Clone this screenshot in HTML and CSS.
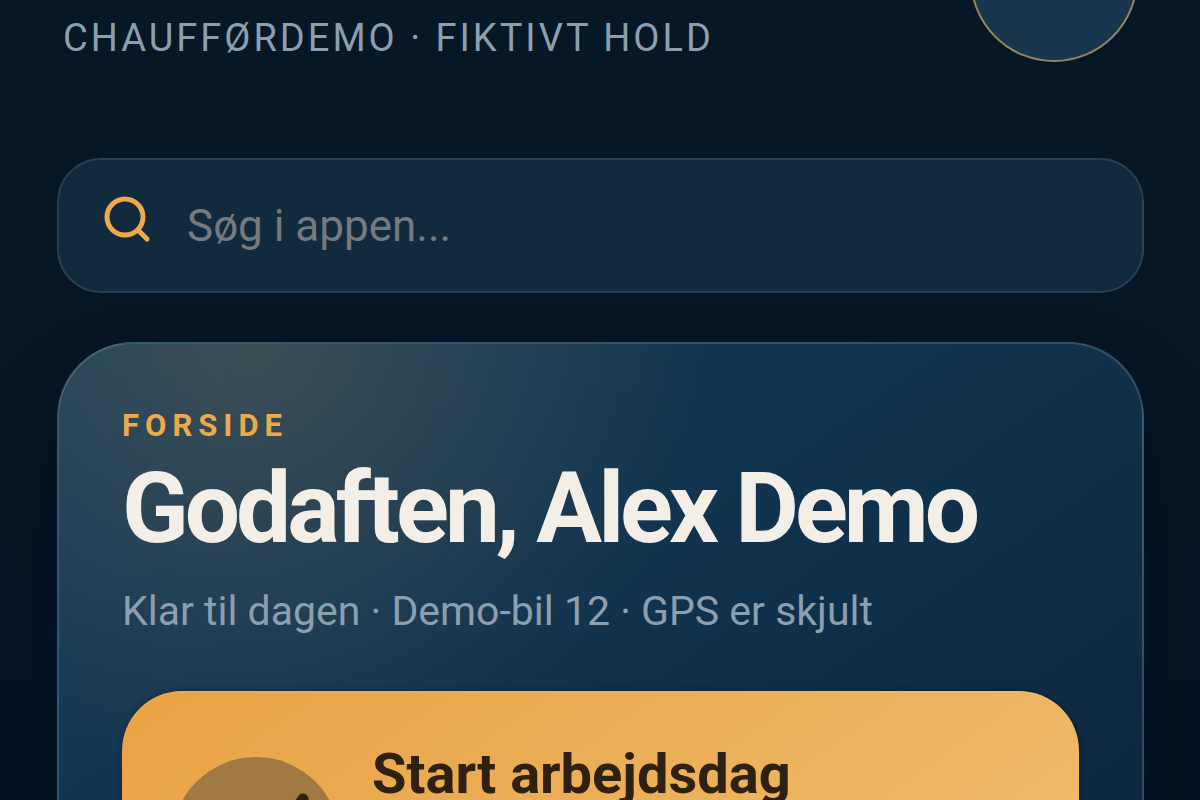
FILE: index.html
```html
<!DOCTYPE html>
<html lang="da">
<head>
<meta charset="utf-8">
<meta name="viewport" content="width=device-width, initial-scale=1">
<title>Chaufførdemo</title>
<link rel="stylesheet" href="styles.css">
</head>
<body>
<div class="app">
  <header class="topbar">
    <p class="team">Chaufførdemo · Fiktivt hold</p>
    <div class="avatar"></div>
  </header>
  <label class="search">
    <svg class="search-icon" viewBox="0 0 48 48" aria-hidden="true"><circle cx="22" cy="21" r="18"/><path d="M35 34l9 9"/></svg>
    <input class="search-input" type="search" placeholder="Søg i appen..." aria-label="Søg i appen">
  </label>
  <main class="hero">
    <p class="eyebrow">Forside</p>
    <h1 class="greeting">Godaften, Alex Demo</h1>
    <p class="status">Klar til dagen · Demo-bil 12 · GPS er skjult</p>
    <button class="start" type="button">
      <span class="start-icon"><svg viewBox="0 0 96 96" aria-hidden="true"><path d="M20 56l24 24 51-74"/></svg></span>
      <span class="start-title">Start arbejdsdag</span>
    </button>
  </main>
</div>
</body>
</html>
```
FILE: styles.css
```css
* {
  box-sizing: border-box;
}

html {
  background: #051523;
}

body {
  margin: 0;
  height: 100vh;
  overflow: hidden;
  background: linear-gradient(180deg, #061725, #041424);
  color: #f4efe6;
  font-family: Roboto, "Liberation Sans", sans-serif;
}

p,
h1 {
  margin: 0;
}

.app {
  padding: 0 56px 0 57px;
}

/* The bar starts above the fold, scrolled partly out of view. */
.topbar {
  display: flex;
  align-items: flex-end;
  justify-content: space-between;
  margin-top: -106px;
  padding: 0 6px;
}

.team {
  color: #8c9fae;
  font-size: 38px;
  line-height: 48px;
  letter-spacing: 3px;
  text-transform: uppercase;
}

.avatar {
  width: 168px;
  height: 168px;
  border: 2px solid #95825f;
  border-radius: 50%;
  background: #18364e;
}

.search {
  display: flex;
  align-items: center;
  gap: 36px;
  height: 135px;
  margin-top: 96px;
  padding: 0 44px;
  border: 2px solid #2a4050;
  border-radius: 44px;
  background: #122a3d;
}

.search-icon {
  width: 48px;
  height: 48px;
  margin-bottom: 12px;
  fill: none;
  stroke: #eda94c;
  stroke-width: 5;
  stroke-linecap: round;
}

.search-input {
  flex: 1;
  min-width: 0;
  padding: 0;
  border: 0;
  outline: 0;
  background: none;
  color: #f4efe6;
  font-family: inherit;
  font-size: 44px;
}

.search-input::placeholder {
  color: #757a7e;
  opacity: 1;
}

.hero {
  height: 900px;
  margin-top: 49px;
  padding: 62px 63px;
  border: 2px solid rgba(143, 163, 181, 0.28);
  border-radius: 76px;
  background:
    radial-gradient(circle at 18% 0%, rgba(237, 169, 76, 0.18), transparent 450px),
    linear-gradient(145deg, #163d5c 0%, #10324d 42%, #0b2539 85%) border-box;
  box-shadow: 0 44px 90px rgba(0, 0, 0, 0.16);
}

.eyebrow {
  color: #eda94c;
  font-size: 31px;
  font-weight: 700;
  line-height: 40px;
  letter-spacing: 6px;
  text-transform: uppercase;
}

.greeting {
  margin-top: 9px;
  font-size: 98px;
  font-weight: 700;
  line-height: 108px;
  letter-spacing: -4px;
}

.status {
  margin-top: 22px;
  color: #8c9fae;
  font-size: 41px;
  line-height: 52px;
}

.start {
  display: flex;
  align-items: flex-start;
  gap: 32px;
  width: 100%;
  height: 300px;
  margin-top: 54px;
  padding: 51px 50px;
  border: 0;
  border-radius: 60px;
  background: linear-gradient(145deg, #e8a243, #efb968 80%);
  box-shadow: inset 0 2px 0 rgba(255, 255, 255, 0.06), 0 0 6px rgba(0, 0, 0, 0.3);
  color: #2f2111;
  font-family: inherit;
  text-align: left;
}

.start-icon {
  display: flex;
  flex: none;
  align-items: center;
  justify-content: center;
  width: 168px;
  height: 168px;
  margin-top: 15px;
  border-radius: 50%;
  background: #a17a43;
}

.start-icon svg {
  width: 96px;
  height: 96px;
  fill: none;
  stroke: #2f2111;
  stroke-width: 11;
  stroke-linecap: round;
  stroke-linejoin: round;
  overflow: visible;
}

.start-title {
  font-size: 56px;
  font-weight: 700;
  line-height: 64px;
}
```
